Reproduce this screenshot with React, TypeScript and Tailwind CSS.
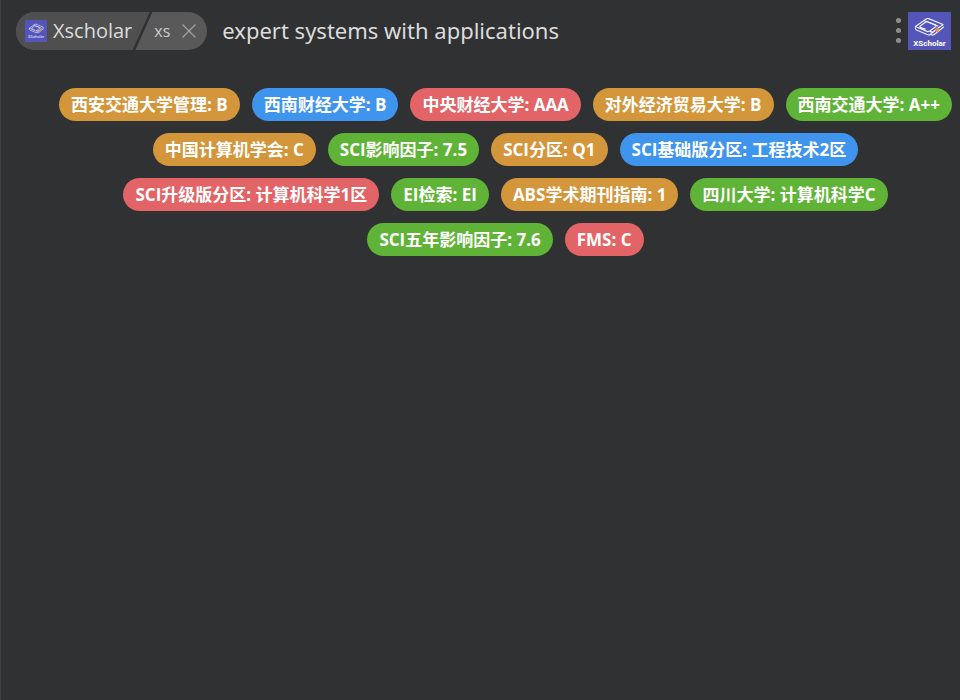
type Tone = 'orange' | 'blue' | 'red' | 'green';

const tones: Record<Tone, string> = {
  orange: 'bg-[#d3963a]',
  blue: 'bg-[#3f94ee]',
  red: 'bg-[#e26467]',
  green: 'bg-[#5fb336]',
};

const ranks: { label: string; value: string; tone: Tone }[] = [
  { label: '西安交通大学管理', value: 'B', tone: 'orange' },
  { label: '西南财经大学', value: 'B', tone: 'blue' },
  { label: '中央财经大学', value: 'AAA', tone: 'red' },
  { label: '对外经济贸易大学', value: 'B', tone: 'orange' },
  { label: '西南交通大学', value: 'A++', tone: 'green' },
  { label: '中国计算机学会', value: 'C', tone: 'orange' },
  { label: 'SCI影响因子', value: '7.5', tone: 'green' },
  { label: 'SCI分区', value: 'Q1', tone: 'orange' },
  { label: 'SCI基础版分区', value: '工程技术2区', tone: 'blue' },
  { label: 'SCI升级版分区', value: '计算机科学1区', tone: 'red' },
  { label: 'EI检索', value: 'EI', tone: 'green' },
  { label: 'ABS学术期刊指南', value: '1', tone: 'orange' },
  { label: '四川大学', value: '计算机科学C', tone: 'green' },
  { label: 'SCI五年影响因子', value: '7.6', tone: 'green' },
  { label: 'FMS', value: 'C', tone: 'red' },
];

function LogoMark({ className }: { className: string }) {
  return (
    <svg viewBox="0 0 34 20" className={className} fill="none" stroke="#eeeefc" strokeWidth="1.2" strokeLinejoin="round" strokeLinecap="round" aria-hidden="true">
      <path d="M2.500 9.500 14 1.500Q15 1 16 1.400L31 7.500 20 15.500 17.500 14.500" />
      <path d="M2.500 9.500 14.500 14.500Q16 15 17.300 14.100L23.500 9.500Q24.500 8.500 23 7.800L15.500 4.800Q14 4.300 12.800 5.100L7.500 9Q6.500 10 8 10.500L12.500 12.200" />
      <path d="M12 3.500 25.500 9M2.500 11Q2 12.300 3.500 13L16.500 18.500 22 14.500M31.500 10 22 17.800Q20.500 18.800 19 18L17.800 17.200" />
      <circle cx="25" cy="13" r="1.900" fill="#f0913a" stroke="none" />
    </svg>
  );
}

export default function App() {
  return (
    <main className="min-h-screen border-l border-[#3d4042] bg-[#303133] font-['Open_Sans','Noto_Sans_CJK_SC',sans-serif] text-[#dcdcdc]">
      <header className="flex items-center pt-3 pr-[9px] pl-[15px]">
        <div className="flex h-[38px] shrink-0 items-stretch overflow-hidden rounded-full bg-[#595959]">
          <div className="flex items-center gap-[6px] bg-[#4f4f4f] pl-[9px]">
            <span className="flex size-[22px] flex-col items-center justify-center bg-[#5355b9]">
              <LogoMark className="h-[11px] w-[17px]" />
              <span className="font-['Roboto',sans-serif] text-[4px] leading-[6px] font-medium text-[#d4d4f4]">XScholar</span>
            </span>
            <span className="text-[20px] leading-[26px]">Xscholar</span>
          </div>
          <svg width="22" height="38" viewBox="0 0 22 38" className="shrink-0" aria-hidden="true">
            <path d="M0 0H19L2 38H0Z" fill="#4f4f4f" />
            <path d="M19.500 -1 1.500 39" stroke="#303133" strokeWidth="2.500" />
          </svg>
          <div className="flex items-center gap-[11px] pr-[10px]">
            <span className="text-[16px] leading-[22px] text-[#cccccc]">xs</span>
            <button type="button" aria-label="Close" className="flex size-4 items-center justify-center">
              <svg width="16" height="16" viewBox="0 0 16 16" stroke="#a2a2a2" strokeWidth="1.200" aria-hidden="true">
                <path d="M1.500 1.500 14.500 14.500M14.500 1.500 1.500 14.500" />
              </svg>
            </button>
          </div>
        </div>
        <input
          aria-label="Search"
          defaultValue="expert systems with applications"
          className="ml-[15px] h-[38px] min-w-0 flex-1 bg-transparent pb-[2px] font-['Noto_Sans','Noto_Sans_CJK_SC',sans-serif] text-[22px] leading-[30px] outline-none"
        />
        <button type="button" aria-label="More" className="mr-[7px] flex h-[38px] w-[5px] flex-col items-center justify-center gap-[5px] pb-[2px]">
          <span className="size-[5px] rounded-full bg-[#8f8f8f]" />
          <span className="size-[5px] rounded-full bg-[#8f8f8f]" />
          <span className="size-[5px] rounded-full bg-[#8f8f8f]" />
        </button>
        <div className="flex h-[38px] w-[43px] shrink-0 flex-col items-center bg-[#5355b9] pt-[5px]">
          <LogoMark className="h-[20px] w-[33px]" />
          <span className="pt-[2px] font-['Roboto',sans-serif] text-[8px] leading-[10px] font-bold text-white">XScholar</span>
        </div>
      </header>
      <ul className="flex flex-wrap justify-center gap-3 pt-[38px] pl-[50px]">
        {ranks.map((r) => (
          <li key={r.label} className={`flex h-[33px] items-center rounded-full px-3 text-[17px] leading-6 font-bold whitespace-nowrap text-white ${tones[r.tone]}`}>
            {r.label}: {r.value}
          </li>
        ))}
      </ul>
    </main>
  );
}
